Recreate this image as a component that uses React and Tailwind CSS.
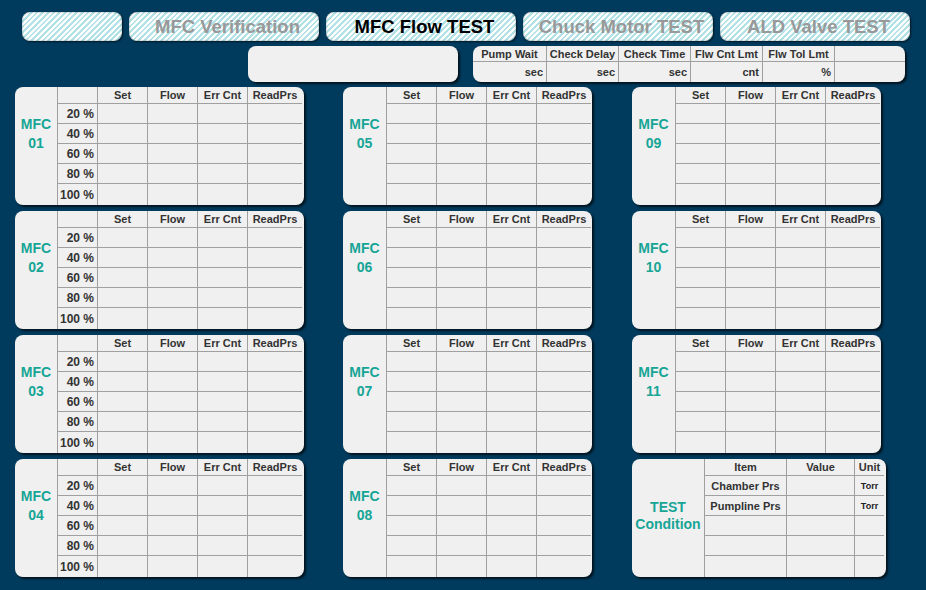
import React from "react";

const stripe =
  "bg-[repeating-linear-gradient(135deg,#ffffff_0px,#ffffff_2px,#b3e2e6_2px,#b3e2e6_4px)]";

const tabs = [
  { label: "", w: "w-[100px]", active: false },
  { label: "MFC Verification", w: "w-[190px]", active: false },
  { label: "MFC Flow TEST", w: "w-[190px]", active: true },
  { label: "Chuck Motor TEST", w: "w-[190px]", active: false },
  { label: "ALD Valve TEST", w: "w-[190px]", active: false },
];

const baseCols = [
  { t: "Set", w: "w-[50px]" },
  { t: "Flow", w: "w-[50px]" },
  { t: "Err Cnt", w: "w-[50px]" },
  { t: "ReadPrs", w: "w-[55px]" },
];

const pcts = ["20 %", "40 %", "60 %", "80 %", "100 %"];

const cardCls =
  "flex h-[118px] rounded-[8px] bg-[#f0f0f0] shadow-[2px_2px_2px_rgba(0,0,0,0.65)]";

function MfcCard({ id, pct }) {
  const cols = pct ? [{ t: "", w: "w-[40px]", pct: true }, ...baseCols] : baseCols;
  return (
    <div className={`${cardCls} ${pct ? "w-[289px]" : "w-[249px]"}`}>
      <div
        className={`${pct ? "w-[42px]" : "w-[43px]"} flex shrink-0 flex-col items-center pt-[28px] text-[14px] font-bold leading-[19px] text-[#17a596]`}
      >
        <span>MFC</span>
        <span>{id}</span>
      </div>
      <div className="flex flex-col">
        <div className="flex h-[17px] border-b border-[#a0a0a0]">
          {cols.map((c, i) => (
            <div
              key={i}
              className={`${c.w} flex items-center justify-center border-l border-[#a0a0a0] pt-[1px] text-[11px] font-bold leading-none text-[#333]`}
            >
              {c.t}
            </div>
          ))}
        </div>
        {pcts.map((p, r) => (
          <div
            key={r}
            className={`flex ${r < 4 ? "h-[20px] border-b border-[#a0a0a0]" : "flex-1"}`}
          >
            {cols.map((c, i) => (
              <div
                key={i}
                className={`${c.w} flex items-center justify-end border-l border-[#a0a0a0] pr-[3px] pt-[1px] text-[12px] font-bold leading-none text-[#333]`}
              >
                {c.pct ? p : ""}
              </div>
            ))}
          </div>
        ))}
      </div>
    </div>
  );
}

const testCols = [
  { t: "Item", w: "w-[82px]" },
  { t: "Value", w: "w-[68px]" },
  { t: "Unit", w: "w-[30px]" },
];

const testRows = [
  ["Chamber Prs", "", "Torr"],
  ["Pumpline Prs", "", "Torr"],
  ["", "", ""],
  ["", "", ""],
  ["", "", ""],
];

function TestCard() {
  return (
    <div className={`${cardCls} w-[254px]`}>
      <div className="flex w-[72px] shrink-0 flex-col items-center justify-center pb-[4px] text-[14px] font-bold leading-[17px] text-[#17a596]">
        <span>TEST</span>
        <span>Condition</span>
      </div>
      <div className="flex flex-col">
        <div className="flex h-[17px] border-b border-[#a0a0a0]">
          {testCols.map((c, i) => (
            <div
              key={i}
              className={`${c.w} flex items-center justify-center border-l border-[#a0a0a0] pt-[1px] text-[11px] font-bold leading-none text-[#333]`}
            >
              {c.t}
            </div>
          ))}
        </div>
        {testRows.map((row, r) => (
          <div
            key={r}
            className={`flex ${r < 4 ? "h-[20px] border-b border-[#a0a0a0]" : "flex-1"}`}
          >
            {testCols.map((c, i) => (
              <div
                key={i}
                className={`${c.w} flex items-center justify-center border-l border-[#a0a0a0] pt-[1px] font-bold leading-none ${
                  i === 2 ? "text-[9px] text-[#222]" : "text-[11px] text-[#333]"
                }`}
              >
                {row[i]}
              </div>
            ))}
          </div>
        ))}
      </div>
    </div>
  );
}

const params = [
  { t: "Pump Wait", u: "sec", w: "w-[73px]" },
  { t: "Check Delay", u: "sec", w: "w-[72px]" },
  { t: "Check Time", u: "sec", w: "w-[72px]" },
  { t: "Flw Cnt Lmt", u: "cnt", w: "w-[72px]" },
  { t: "Flw Tol Lmt", u: "%", w: "w-[72px]" },
  { t: "", u: "", w: "w-[71px]" },
];

export default function App() {
  return (
    <div className="h-[590px] w-[926px] overflow-hidden bg-[#003a5c] font-['Liberation_Sans',Arial,sans-serif]">
      {/* Tabs */}
      <div className="ml-[22px] flex gap-[7px] pt-[12px]">
        {tabs.map((t, i) => (
          <div
            key={i}
            className={`${t.w} ${stripe} flex h-[29px] items-center justify-center rounded-[8px] pl-[7px] pt-[1px] text-[18.5px] font-bold leading-none shadow-[inset_0_0_2px_rgba(0,0,0,0.45),1px_1px_2px_rgba(0,0,0,0.6)] ${
              t.active ? "text-black" : "text-[#999999]"
            }`}
          >
            {t.label}
          </div>
        ))}
      </div>

      {/* Second row */}
      <div className="mt-[5px] flex h-[36px]">
        <div className="ml-[248px] h-full w-[210px] rounded-[8px] bg-[#f0f0f0] shadow-[2px_2px_2px_rgba(0,0,0,0.65)]" />
        <div className="ml-[15px] flex h-full w-[432px] flex-col overflow-hidden rounded-[8px] bg-[#f0f0f0] shadow-[2px_2px_2px_rgba(0,0,0,0.65)]">
          <div className="flex h-[16px] border-b border-[#a0a0a0]">
            {params.map((p, i) => (
              <div
                key={i}
                className={`${p.w} flex items-center justify-center pt-[1px] text-[11px] font-bold leading-none text-[#333] ${
                  i > 0 ? "border-l border-[#a0a0a0]" : ""
                }`}
              >
                {p.t}
              </div>
            ))}
          </div>
          <div className="flex flex-1">
            {params.map((p, i) => (
              <div
                key={i}
                className={`${p.w} flex items-center justify-end pr-[3px] pt-[1px] text-[11px] font-bold leading-none text-[#333] ${
                  i > 0 ? "border-l border-[#a0a0a0]" : ""
                }`}
              >
                {p.u}
              </div>
            ))}
          </div>
        </div>
      </div>

      {/* Grid of cards */}
      <div className="mt-[5px] flex">
        <div className="ml-[15px] flex flex-col gap-[6px]">
          <MfcCard id="01" pct />
          <MfcCard id="02" pct />
          <MfcCard id="03" pct />
          <MfcCard id="04" pct />
        </div>
        <div className="ml-[39px] flex flex-col gap-[6px]">
          <MfcCard id="05" />
          <MfcCard id="06" />
          <MfcCard id="07" />
          <MfcCard id="08" />
        </div>
        <div className="ml-[40px] flex flex-col gap-[6px]">
          <MfcCard id="09" />
          <MfcCard id="10" />
          <MfcCard id="11" />
          <TestCard />
        </div>
      </div>
    </div>
  );
}
